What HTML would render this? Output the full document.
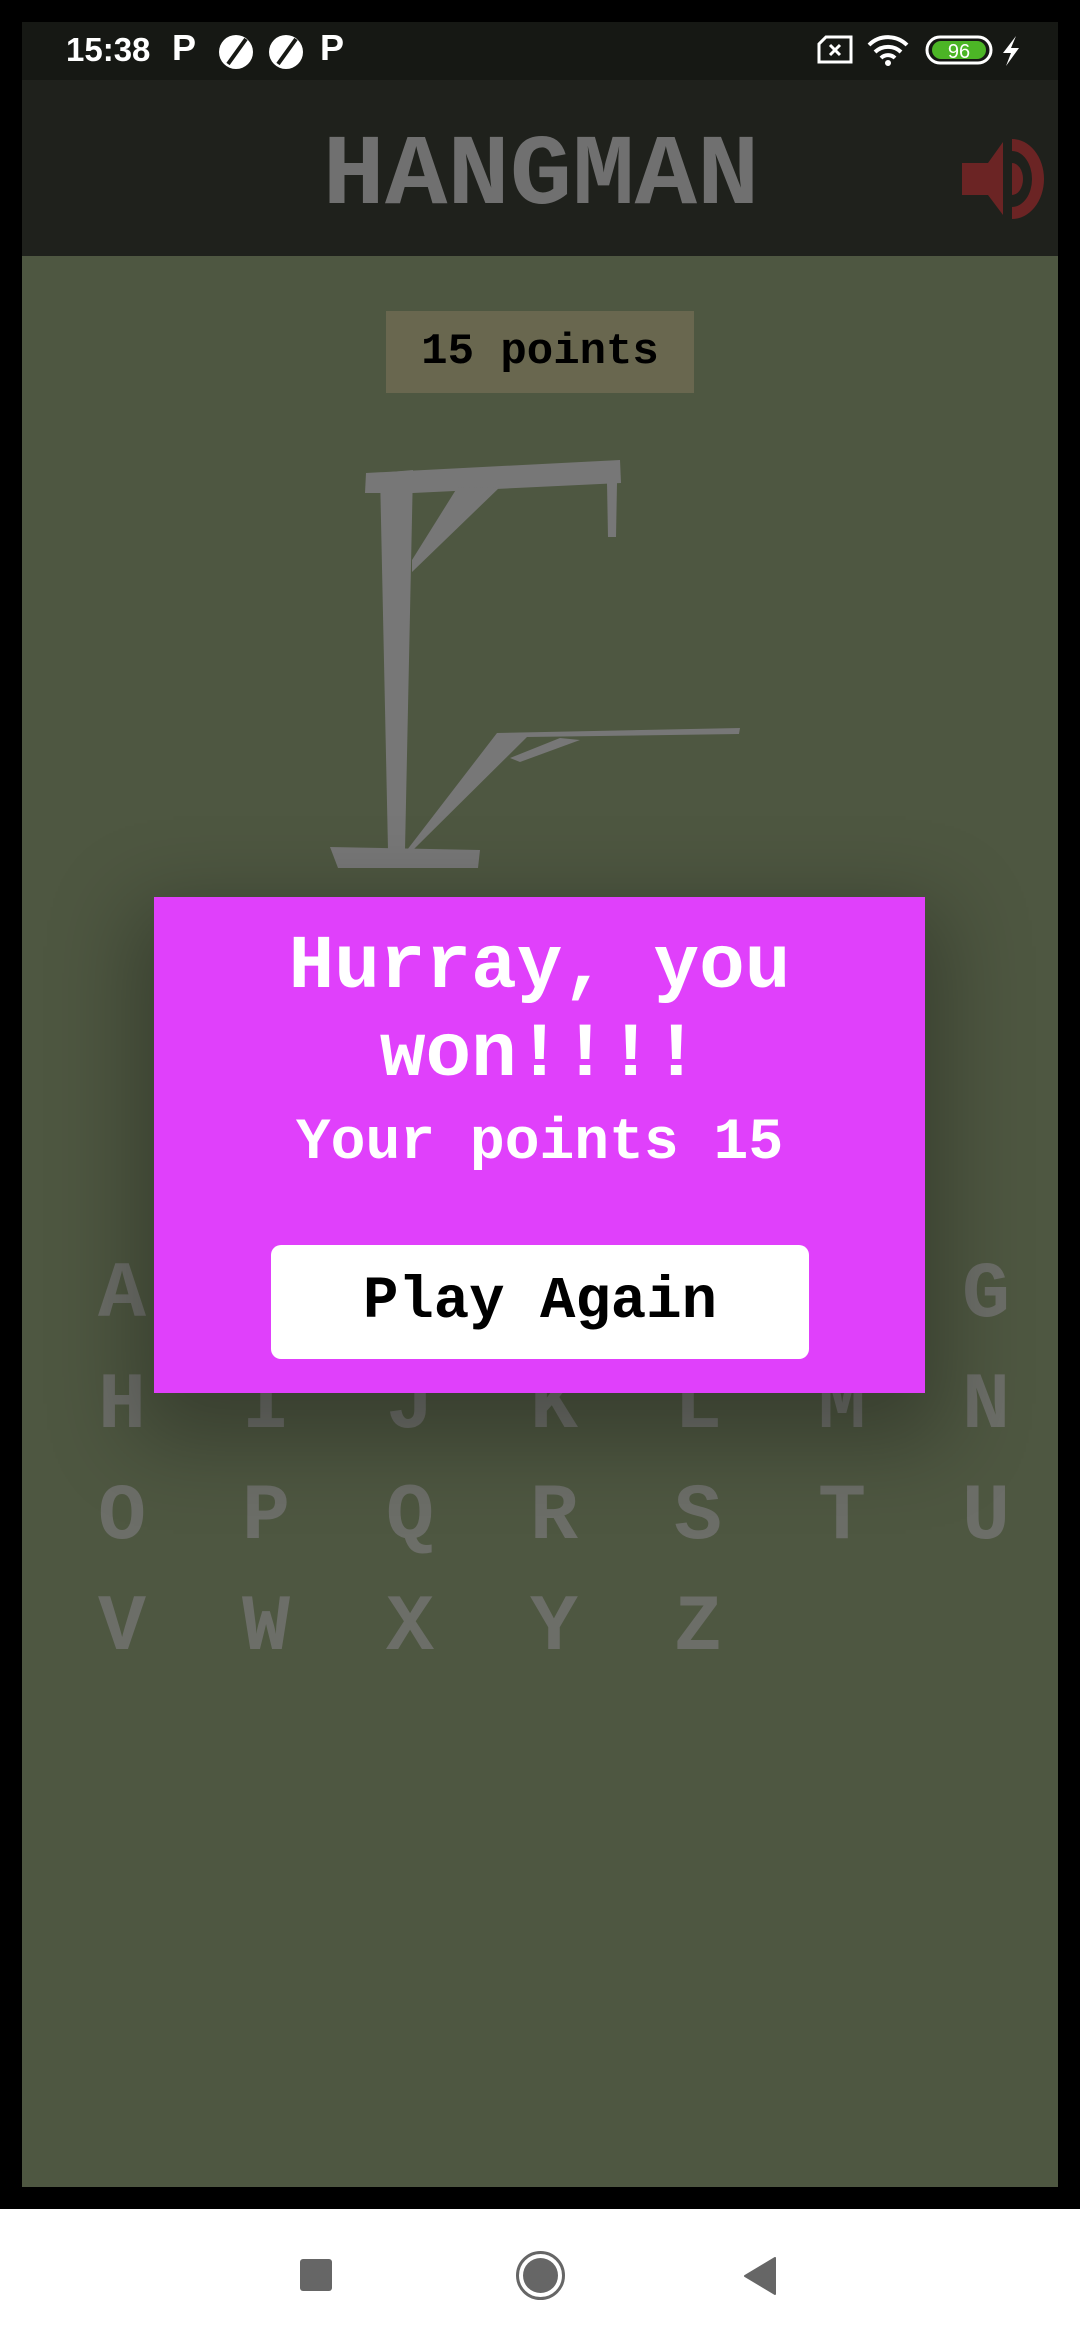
<!DOCTYPE html>
<html><head><meta charset="utf-8">
<style>
*{margin:0;padding:0;box-sizing:border-box}
html,body{width:1080px;height:2340px;overflow:hidden;background:#000;font-family:"Liberation Mono",monospace}
.abs{position:absolute}
#status{left:22px;top:22px;width:1036px;height:58px;background:#161814}
#appbar{left:22px;top:80px;width:1036px;height:176px;background:#1f211c}
#content{left:22px;top:256px;width:1036px;height:1931px;background:#4e5741}
#nav{left:0;top:2209px;width:1080px;height:131px;background:#fff}
.letter{position:absolute;width:60px;text-align:center;font-weight:bold;font-size:80px;line-height:80px;color:#6c6e68}
</style></head><body>
<div class="abs" id="status">
  <div class="abs" style="left:44px;top:8px;color:#fff;font-family:'Liberation Sans',sans-serif;font-weight:bold;font-size:33px;line-height:40px">15:38</div>
  <div class="abs" style="left:150px;top:4px;color:#fff;font-family:'Liberation Sans',sans-serif;font-weight:bold;font-size:36px;line-height:44px">P</div>
  <svg class="abs" style="left:196px;top:12px" width="36" height="36" viewBox="0 0 36 36"><circle cx="18" cy="18" r="17" fill="#fff"/><path d="M10 30 L28 5" stroke="#161814" stroke-width="4"/></svg>
  <svg class="abs" style="left:246px;top:12px" width="36" height="36" viewBox="0 0 36 36"><circle cx="18" cy="18" r="17" fill="#fff"/><path d="M10 30 L28 5" stroke="#161814" stroke-width="4"/></svg>
  <div class="abs" style="left:298px;top:4px;color:#fff;font-family:'Liberation Sans',sans-serif;font-weight:bold;font-size:36px;line-height:44px">P</div>
  <svg class="abs" style="left:795px;top:13px" width="36" height="29" viewBox="0 0 36 29"><path d="M9 2 H34 V27 H2 V9 Z" fill="none" stroke="#fff" stroke-width="3"/><path d="M13 10 L23 20 M23 10 L13 20" stroke="#fff" stroke-width="3"/></svg>
  <svg class="abs" style="left:845px;top:12px" width="42" height="32" viewBox="0 0 42 32"><path d="M2 11 A27 27 0 0 1 40 11" fill="none" stroke="#fff" stroke-width="4"/><path d="M8 18 A19 19 0 0 1 34 18" fill="none" stroke="#fff" stroke-width="4"/><path d="M14 24 A10 10 0 0 1 28 24" fill="none" stroke="#fff" stroke-width="4"/><circle cx="21" cy="29" r="3" fill="#fff"/></svg>
  <svg class="abs" style="left:903px;top:13px" width="68" height="30" viewBox="0 0 68 30"><rect x="2" y="2" width="64" height="26" rx="13" fill="none" stroke="#fff" stroke-width="3"/><rect x="7" y="6" width="54" height="18" rx="9" fill="#4cb526"/><text x="34" y="23" text-anchor="middle" font-family="Liberation Sans" font-size="20" fill="#fff">96</text></svg>
  <svg class="abs" style="left:978px;top:13px" width="22" height="32" viewBox="0 0 22 32"><path d="M16 1 L3 18 H11 L6 31 L19 13 H11 Z" fill="#fff"/></svg>
</div>
<div class="abs" id="appbar">
  <div class="abs" style="left:300px;top:50px;width:438px;text-align:center;color:#707070;font-weight:bold;font-size:100px;line-height:96px;transform:scaleX(1.04)">HANGMAN</div>
  <svg class="abs" style="left:940px;top:59px" width="90" height="82" viewBox="0 0 90 82"><path d="M0 24 H26 L41 3 V76 L26 56 H0 Z" fill="#6b2424"/><path d="M50 0 A32 40 0 0 1 50 80 V68 A20 28 0 0 0 50 12 Z" fill="#6b2424"/><path d="M50 24 A11 16 0 0 1 50 56 Z" fill="#6b2424"/></svg>
</div>
<div class="abs" id="content">
  <div class="abs" style="left:364px;top:55px;width:308px;height:82px;background:#69674f"></div>
  <div class="abs" style="left:364px;top:60px;width:308px;height:72px;text-align:center;color:#000;font-weight:bold;font-size:44px;line-height:72px">15 points</div>
</div>
<svg class="abs" style="left:0;top:0" width="1080" height="900" viewBox="0 0 1080 900">
  <g fill="#777">
    <path d="M380 473 L413 470 L405 850 L388 850 Z"/>
    <path d="M365 493 L366 473 L620 460 L621 483 L413 493 Z"/>
    <path d="M607 483 L617 483 L616 537 L608 537 Z"/>
    <path d="M412 560 L457 488 L500 487 L412 572 Z"/>
    <path d="M330 847 L480 850 L478 868 L338 868 Z"/>
    <path d="M407 850 L497 733 L740 728 L739 734 L527 737 L413 850 Z"/>
    <path d="M510 758 L560 738 L580 740 L520 762 Z"/>
  </g>
</svg>
<div class="letter" style="left:92px;top:1256px">A</div>
<div class="letter" style="left:956px;top:1256px">G</div>
<div class="letter" style="left:92px;top:1367px">H</div>
<div class="letter" style="left:236px;top:1367px">I</div>
<div class="letter" style="left:380px;top:1367px">J</div>
<div class="letter" style="left:524px;top:1367px">K</div>
<div class="letter" style="left:668px;top:1367px">L</div>
<div class="letter" style="left:812px;top:1367px">M</div>
<div class="letter" style="left:956px;top:1367px">N</div>
<div class="letter" style="left:92px;top:1478px">O</div>
<div class="letter" style="left:236px;top:1478px">P</div>
<div class="letter" style="left:380px;top:1478px">Q</div>
<div class="letter" style="left:524px;top:1478px">R</div>
<div class="letter" style="left:668px;top:1478px">S</div>
<div class="letter" style="left:812px;top:1478px">T</div>
<div class="letter" style="left:956px;top:1478px">U</div>
<div class="letter" style="left:92px;top:1589px">V</div>
<div class="letter" style="left:236px;top:1589px">W</div>
<div class="letter" style="left:380px;top:1589px">X</div>
<div class="letter" style="left:524px;top:1589px">Y</div>
<div class="letter" style="left:668px;top:1589px">Z</div>
<div class="abs" style="left:154px;top:897px;width:771px;height:496px;background:#e040fb;box-shadow:0 30px 80px 20px rgba(0,0,0,0.28)">
  <div class="abs" style="left:0;top:26px;width:771px;text-align:center;color:#fff;font-weight:bold;font-size:76px;line-height:88px">Hurray, you<br>won!!!!</div>
  <div class="abs" style="left:0;top:212px;width:771px;text-align:center;color:#fff;font-weight:bold;font-size:58px;line-height:70px">Your points 15</div>
  <div class="abs" style="left:117px;top:348px;width:538px;height:114px;background:#fff;border-radius:10px;text-align:center;color:#000;font-weight:bold;font-size:59px;line-height:114px">Play Again</div>
</div>
<div class="abs" id="nav">
  <div class="abs" style="left:300px;top:50px;width:32px;height:32px;background:#666;border-radius:3px"></div>
  <div class="abs" style="left:516px;top:42px;width:49px;height:49px;border:3px solid #666;border-radius:50%"></div>
  <div class="abs" style="left:523px;top:49px;width:35px;height:35px;background:#666;border-radius:50%"></div>
  <svg class="abs" style="left:743px;top:48px" width="34" height="38" viewBox="0 0 34 38"><path d="M32 1 V37 L2 19 Z" fill="#666" stroke="#666" stroke-linejoin="round" stroke-width="2"/></svg>
</div>
</body></html>
